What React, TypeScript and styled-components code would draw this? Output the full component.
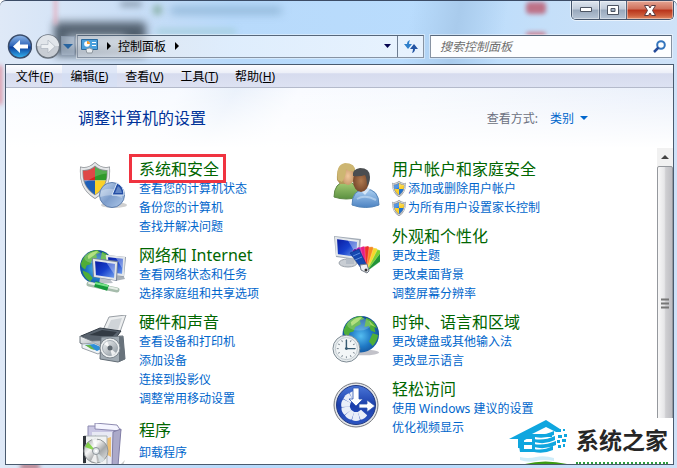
import React from "react";
import styled, { createGlobalStyle, css } from "styled-components";

const Global = createGlobalStyle`
  *, *::before, *::after { box-sizing: border-box; }
  body {
    margin: 0;
    font-family: "Noto Sans", "Noto Sans CJK SC", sans-serif;
    font-size: 12px;
    line-height: 19px;
    color: #000;
  }
  button, input, select { font: inherit; color: inherit; margin: 0; padding: 0; }
  svg { display: block; flex: none; }
`;

const Frame = styled.div`
  position: relative;
  display: flex;
  flex-direction: column;
  height: 100vh;
  padding: 0 3px 3px 5px;
  overflow: hidden;
  border-top: 1px solid #3c4c66;
  border-radius: 6px 6px 0 0;
  background:
    linear-gradient(100deg, transparent 60%, #a9cbec 67%, transparent 74%) 0 0 / 100% 64px no-repeat,
    linear-gradient(90deg, #dfe9f7 0, #c9def6 20%, #b8dafb 34%, #b9dcfd 66%, #c4dff9 80%, #cfe2f8 100%);
`;

const Smudge = styled.span<{ $x: number; $y: number; $w: number; $h: number; $c: string; $b?: number }>`
  position: absolute;
  left: ${(p) => p.$x}px;
  top: ${(p) => p.$y}px;
  width: ${(p) => p.$w}px;
  height: ${(p) => p.$h}px;
  background: ${(p) => p.$c};
  filter: blur(${(p) => p.$b ?? 4}px);
  border-radius: 4px;
`;

const TitleBar = styled.header`
  position: relative;
  display: flex;
  justify-content: flex-end;
  height: 33px;
`;

const Captions = styled.div`
  display: flex;
  height: 19px;
  border: 1px solid #46566c;
  border-top: 0;
  border-radius: 0 0 5px 5px;
  overflow: hidden;
  box-shadow: 0 0 0 1px #ffffff99;
`;

const Caption = styled.button<{ $close?: boolean }>`
  display: grid;
  place-items: center;
  width: ${(p) => (p.$close ? 47 : 27)}px;
  border: 0;
  border-left: 1px solid #55657c;
  background: ${(p) =>
    p.$close
      ? "linear-gradient(#e5a493, #cf6f5a 45%, #b8321a 50%, #cc5d3c 80%, #e08a64)"
      : "linear-gradient(#dfe6ef, #c0cbd9 45%, #98a8bc 50%, #b6c4d5)"};
  box-shadow: inset 0 0 0 1px #ffffff66;
  &:first-child { border-left: 0; }
`;

const NavRow = styled.nav`
  position: relative;
  display: flex;
  align-items: center;
  height: 24px;
  margin-bottom: 6px;
  padding-right: 2px;
`;

const Travel = styled.div`
  display: flex;
  align-items: center;
  width: 72px;
  gap: 1px;
  button { border: 0; background: none; }
`;

const HistoryButton = styled.button`
  display: grid;
  place-items: center;
  width: 14px;
  height: 20px;
  && { background: #b9c9dc88; box-shadow: inset 0 0 0 1px #7f8fa388; }
`;

const fieldEdge = css`
  height: 23px;
  border: 1px solid #8793a3;
  border-top-color: #56677b;
  box-shadow: 0 0 0 1px #ffffff66;
`;

const Address = styled.div`
  ${fieldEdge}
  display: flex;
  align-items: center;
  flex: 345 1 0;
  background: linear-gradient(90deg, #dfe4ea99, #e6ebf2bb 20%, #e8f2fdcc 45%, #eff6fedd);
`;

const Crumb = styled.button`
  border: 0;
  background: none;
  white-space: nowrap;
`;

const Glyph = styled.span<{ $narrow?: boolean }>`
  display: grid;
  place-items: center;
  width: ${(p) => (p.$narrow ? 18 : 22)}px;
`;

const AddressButton = styled.button<{ $divided?: boolean }>`
  display: grid;
  place-items: center;
  width: ${(p) => (p.$divided ? 26 : 20)}px;
  height: 21px;
  margin-left: ${(p) => (p.$divided ? 0 : "auto")};
  border: 0;
  border-left: ${(p) => (p.$divided ? "1px solid #6d7d92" : "0")};
  background: none;
`;

const Search = styled.label`
  ${fieldEdge}
  display: flex;
  align-items: center;
  flex: 226 1 0;
  margin-left: 6px;
  padding: 0 5px 0 9px;
  background: #fdfeff;
  input {
    flex: 1;
    min-width: 0;
    border: 0;
    outline: 0;
    background: none;
  }
  input::placeholder { color: #6e6e6e; opacity: 1; font-style: italic; }
`;

const Client = styled.div`
  position: relative;
  display: flex;
  flex-direction: column;
  flex: 1;
  min-height: 0;
  border: 1px solid #4a5a6e;
  background: #fff;
`;

const MenuBar = styled.div`
  display: flex;
  flex: none;
  height: 23px;
  padding-left: 1px;
  border-bottom: 1px solid #b4bacb;
  background: linear-gradient(#fdfdff, #eceff8 35%, #d6dbee 40%, #dde2f2);
`;

const MenuItem = styled.button<{ $hot?: boolean }>`
  min-width: 55px;
  padding: 0 8px;
  border: 0;
  background: ${(p) => (p.$hot ? "#d3e0f599" : "none")};
  white-space: nowrap;
`;

const Banner = styled.div`
  display: flex;
  align-items: center;
  justify-content: space-between;
  flex: none;
  height: 60px;
  padding: 0 85px 0 72px;
  background:
    linear-gradient(#ffffff00, #fff),
    linear-gradient(120deg, #fafcff 0, #f7faff 25%, #eaf1fb 33%, #f9fbff 42%, #f6f9fe 60%, #e9effa 100%);
`;

const Title = styled.h1`
  margin: 0;
  font-size: 16px;
  font-weight: 400;
  color: #003399;
`;

const ViewBy = styled.label`
  display: flex;
  align-items: center;
  color: #6b7080;
  select {
    width: 26px;
    margin: 0 4px 0 12px;
    border: 0;
    appearance: none;
    background: none;
    color: #0066cc;
    outline: 0;
  }
`;

const Pane = styled.main`
  display: flex;
  flex: 1;
  min-height: 0;
  overflow: hidden;
`;

const Columns = styled.div`
  display: grid;
  grid-template-columns: 253px 1fr;
  flex: 1;
  padding: 12px 0 0 73px;
`;

const Column = styled.div`
  display: flex;
  flex-direction: column;
  gap: 10px;
`;

const Category = styled.section<{ $loose?: boolean }>`
  display: flex;
  gap: 12px;
  margin-top: ${(p) => (p.$loose ? 3 : 0)}px;
  > svg { margin-top: 2px; }
`;

const Heading = styled.h2<{ $marked?: boolean; $loose?: boolean }>`
  position: relative;
  width: max-content;
  margin: 0 0 ${(p) => (p.$loose ? 3 : 0)}px;
  font-size: 16px;
  font-weight: 400;
  line-height: 19px;
  a { color: #006600; text-decoration: none; }
  ${(p) =>
    p.$marked &&
    css`
      &::after {
        content: "";
        position: absolute;
        inset: -6px -7px -4px -10px;
        border: 3px solid #f03340;
        pointer-events: none;
      }
    `}
`;

const Tasks = styled.ul`
  margin: 0;
  padding: 0;
  list-style: none;
`;

const Task = styled.li`
  display: flex;
  align-items: center;
  gap: 2px;
  height: 19px;
  white-space: nowrap;
  a { color: #0066cc; text-decoration: none; }
`;

const Scroll = styled.div`
  display: flex;
  flex-direction: column;
  flex: none;
  width: 16px;
  background: #f0f0f0;
`;

const ScrollButton = styled.button`
  display: grid;
  place-items: center;
  height: 18px;
  border: 0;
  background: #f1f1f1;
`;

const Thumb = styled.div`
  display: grid;
  place-items: center;
  flex: 1;
  border: 1px solid #95989d;
  border-radius: 2px;
  background: linear-gradient(90deg, #f8f8f8, #e6e6e8 45%, #cfcfd2 55%, #bdbdc2);
  padding-bottom: 24px;
`;

const Watermark = styled.div`
  position: absolute;
  right: 0;
  bottom: 0;
  display: flex;
  align-items: center;
  height: 46px;
  padding-right: 5px;
  background: #fff;
`;

const Brand = styled.strong`
  margin-left: 6px;
  border-bottom: 2px dotted #2f9c3c;
  font-size: 23px;
  line-height: 44px;
  color: #262626;
`;

const Arrow = ({ d, w, h, c }: { d: string; w: number; h: number; c: string }) => (
  <svg width={w} height={h} aria-hidden="true"><path d={d} fill={c} /></svg>
);

const shieldPath = "M24 2C18 7 10 9 3 8c-1 16 3 28 21 38C42 36 46 24 45 8 38 9 30 7 24 2z";

const Quarters = ({ id, uac }: { id: string; uac?: boolean }) => (
  <>
    <clipPath id={id}><path d={shieldPath} /></clipPath>
    <g clipPath={`url(#${id})`}>
      <path d="M0 0h24v24H0z" fill={uac ? "#2f7fdc" : "#d8201f"} />
      <path d="M24 0h24v24H24z" fill={uac ? "#fbd02c" : "#2f9a2a"} />
      <path d="M0 24h24v24H0z" fill={uac ? "#fbd02c" : "#1d5fb8"} />
      <path d="M24 24h24v24H24z" fill={uac ? "#2272cf" : "#fbd12a"} />
      <path d="M0 0h48v14C30 14 15 22 3 30z" fill="#fff" opacity=".18" />
    </g>
    <path d={shieldPath} fill="none" stroke="#8b8f94" strokeWidth={uac ? 6 : 5} />
    <path d={shieldPath} fill="none" stroke="#e5e7e9" strokeWidth={3} />
  </>
);

const UacShield = () => (
  <svg width="14" height="16" viewBox="-1 -1 50 50" preserveAspectRatio="none" aria-hidden="true">
    <Quarters id="uac" uac />
  </svg>
);

const SecurityIcon = () => (
  <svg width="48" height="48" aria-hidden="true">
    <defs>
      <linearGradient id="disc" x1="0" y1="0" x2="1" y2="1">
        <stop offset="0" stopColor="#c6d9f0" /><stop offset=".5" stopColor="#7d9dcb" /><stop offset="1" stopColor="#afc9ea" />
      </linearGradient>
    </defs>
    <ellipse cx="35" cy="43" rx="13" ry="3" fill="#777" opacity=".35" />
    <svg width="32" height="37" viewBox="-1 -1 50 50" preserveAspectRatio="none"><Quarters id="sec" /></svg>
    <circle cx="33" cy="33" r="12.500" fill="url(#disc)" stroke="#5f7fae" />
    <path d="M22 29q9-5 21 1v6q-10-5-22-1z" fill="#fff" opacity=".3" />
    <path d="M33 33l5-12q7 3 7 12z" fill="#244ea5" stroke="#dce9f8" />
    <path d="M36 31l3-7q3 2 4 7z" fill="#6286c6" />
  </svg>
);

const Globe = ({ id, cx, cy, r }: { id: string; cx: number; cy: number; r: number }) => (
  <g transform={`translate(${cx - r} ${cy - r}) scale(${r / 20})`}>
    <radialGradient id={id} cx=".5" cy=".55" r=".6">
      <stop offset="0" stopColor="#55bdf0" /><stop offset=".5" stopColor="#1f78c4" /><stop offset="1" stopColor="#0e4288" />
    </radialGradient>
    <circle cx="20" cy="20" r="20" fill={`url(#${id})`} />
    <path d="M4 9Q10 1 20 0l4 3-5 2 1 4-6 3-2 5-4 1-2 5-4-3-1-4zM26 2q9 3 12 12l-3-2 1 6-5-2-2-5-5 1 1-5zM33 19l6 2q-1 7-6 12l-4-5zM3 24l7 3 5 6-3 4Q4 32 3 24z" fill="#4fae38" />
    <path d="M9 7q6-6 13-6l-5 5-7 5zM29 5l7 7-5-2z" fill="#b7e36d" opacity=".8" />
    <ellipse cx="18" cy="9" rx="13" ry="7" fill="#fff" opacity=".2" />
  </g>
);

const Screen = ({ d, shine }: { d: string; shine: string }) => (
  <>
    <path d={d} fill="url(#screen)" stroke="#e2e6ea" strokeWidth="2" />
    <path d={shine} fill="#fff" opacity=".35" />
  </>
);

const ScreenGradient = () => (
  <linearGradient id="screen" x1="0" y1="0" x2="1" y2="1">
    <stop offset="0" stopColor="#08189a" /><stop offset=".5" stopColor="#1740cc" /><stop offset="1" stopColor="#7faef2" />
  </linearGradient>
);

const NetworkIcon = () => (
  <svg width="48" height="48" aria-hidden="true">
    <defs><ScreenGradient /></defs>
    <Globe id="net" cx={18} cy={19} r={17} />
    <path d="M37 28l7-1 2 4-10 2z" fill="#a8b0b8" />
    <path d="M28 7l19 2-2 20-16-3z" fill="#8e98a6" />
    <Screen d="M28 8l17 2-1 17-15-2z" shine="M37 10l7 1-1 9z" />
    <path d="M21 30h9l4 5-14 1z" fill="#bbc1c8" />
    <path d="M13 10l26 3-1 20-24-4z" fill="#7b8698" />
    <Screen d="M15 12l22 3-1 16-20-3z" shine="M27 14l9 1-1 11z" />
    <path d="M10 36l28 6" stroke="#a6bcac" strokeWidth="5" strokeLinecap="round" />
    <path d="M10 35l28 6" stroke="#e5eee6" strokeWidth="2" strokeLinecap="round" />
    <path d="M16 36l13 4" stroke="#149a3a" strokeWidth="6" />
    <path d="M16 35l13 3" stroke="#7be28c" strokeWidth="2" />
  </svg>
);

const HardwareIcon = () => (
  <svg width="48" height="48" aria-hidden="true">
    <defs>
      <linearGradient id="metal" x1="0" y1="0" x2="1" y2="1">
        <stop offset="0" stopColor="#f2f4f5" /><stop offset="1" stopColor="#8b959d" />
      </linearGradient>
    </defs>
    <path d="M30 2l17-2-6 17-17-2z" fill="#eceeef" stroke="#9a9fa5" />
    <path d="M32 5l11-2-4 12-11-1z" fill="#cfd4d8" />
    <path d="M2 21l19-8 21 3-9 12-19-1z" fill="#59636e" stroke="#333c46" />
    <path d="M10 20l13-5 15 2-5 5z" fill="#333b44" />
    <path d="M1 21l12 5 19-1-2 10-18-2-11-5z" fill="url(#metal)" stroke="#6d767f" />
    <path d="M3 29l12-1 13 6-9 5-16-6z" fill="#eef3f6" stroke="#9aa1a8" />
    <path d="M6 30l9-1 9 4-6 3z" fill="#2d8ed8" /><path d="M6 30l5 0 5 5-4-1z" fill="#65b54b" />
    <path d="M22 22l22-1 2 23-7 3-18-3z" fill="#a1abb3" stroke="#626c75" />
    <path d="M40 21l4 1 2 22-6 3z" fill="#68727b" />
    <circle cx="31" cy="33" r="10" fill="#eceff0" stroke="#7e878f" />
    <circle cx="31" cy="33" r="7.500" fill="url(#metal)" stroke="#a3abb2" />
    <path d="M31 33l-6-4 3-3zM31 33l6 5-4 3z" fill="#fff" opacity=".8" />
    <circle cx="31" cy="33" r="2.500" fill="#5f6870" />
  </svg>
);

const ProgramsIcon = () => (
  <svg width="48" height="48" aria-hidden="true">
    <defs>
      <linearGradient id="cd" x1="0" y1="0" x2="1" y2="1">
        <stop offset="0" stopColor="#8c9192" /><stop offset=".35" stopColor="#f7f7f7" /><stop offset=".6" stopColor="#a6a9aa" /><stop offset="1" stopColor="#eee" />
      </linearGradient>
    </defs>
    <g transform="translate(4 0)">
      <path d="M36 43l6-6-3 8z" fill="#777" opacity=".4" />
      <path d="M5 3h6l25 3-3 38H5z" fill="#c9c6e3" stroke="#8e8bb1" />
      <path d="M12 0l22 2 4 6-26-2z" fill="#f5f5ff" stroke="#8e8bb1" />
      <path d="M9 9h21v35H9z" fill="#e8e9f4" />
      <path d="M30 9l8-3-3 37-6 2z" fill="#aba9c9" stroke="#807da5" />
      <path d="M15 14l7 2 6-2v20l-12-7z" fill="#edc074" /><path d="M12 12l7 9-8 2z" fill="#8fc2a0" />
      <path d="M1 13h23v31H1z" fill="#f0f2f2" stroke="#aab1b5" /><path d="M0 13h3v27H0z" fill="#30343a" />
      <circle cx="13" cy="28" r="12" fill="url(#cd)" stroke="#929799" />
      <path d="M13 28L2 24l3-5z" fill="#72d028" opacity=".8" /><path d="M13 28l9 9-5 3z" fill="#d5dde0" />
      <path d="M13 28L9 16l5-1zM13 28l1 12-6-2z" fill="#fff" opacity=".8" />
      <circle cx="13" cy="28" r="3.500" fill="#e4e9eb" stroke="#899197" /><circle cx="13" cy="28" r="1.300" fill="#fff" />
    </g>
  </svg>
);

const UsersIcon = () => (
  <svg width="48" height="48" aria-hidden="true">
    <defs>
      <linearGradient id="green" x2="0" y2="1"><stop offset="0" stopColor="#abd078" /><stop offset="1" stopColor="#5b9140" /></linearGradient>
      <linearGradient id="blue" x2="0" y2="1"><stop offset="0" stopColor="#acd0f2" /><stop offset="1" stopColor="#4d83c2" /></linearGradient>
      <radialGradient id="tan"><stop offset="0" stopColor="#f0c79d" /><stop offset="1" stopColor="#c99a6c" /></radialGradient>
      <radialGradient id="brown"><stop offset="0" stopColor="#b07a50" /><stop offset="1" stopColor="#78482c" /></radialGradient>
    </defs>
    <path d="M2 35q0-14 12-16 12 1 13 16-13 4-25 0z" fill="url(#green)" stroke="#5e8746" />
    <path d="M5 18Q4 4 13 2q9-1 10 6l-1 11-5 3H8z" fill="#b39a5a" />
    <ellipse cx="16" cy="14" rx="6" ry="9" fill="url(#tan)" />
    <path d="M6 18Q3 3 13 1q10 0 10 8-6 1-9-2 0 8-4 13z" fill="#cdb672" />
    <path d="M20 43q0-15 13-16 14 0 14 16-13 5-27 0z" fill="url(#blue)" stroke="#5484b7" />
    <path d="M27 27l6 6 5-6-5-3z" fill="#d5e6f7" />
    <ellipse cx="29" cy="19" rx="8" ry="11" fill="url(#brown)" />
    <path d="M21 14q-1-7 7-8 10 0 10 9 0 6-3 9 0-8-2-11-5 2-12 1z" fill="#4a4d50" />
    <path d="M25 37q8-5 19 1" stroke="#d8eafa" strokeWidth="2" fill="none" opacity=".5" />
  </svg>
);

const fan = ["#6a1fae", "#b51fb4", "#e81f83", "#f03028", "#f58a22", "#f4d82a", "#7fd02e", "#219436"];

const AppearanceIcon = () => (
  <svg width="48" height="48" aria-hidden="true">
    <defs><ScreenGradient /></defs>
    <ellipse cx="16" cy="34" rx="9" ry="4" fill="#c9ced4" stroke="#9ba2aa" />
    <path d="M14 27h8v8h-8z" fill="#b5bdc7" />
    <path d="M2 7l27 3-2 21-23-3z" fill="#a3acb7" />
    <Screen d="M4 9l22 3-1 17-20-3z" shine="M15 10l10 2-1 13z" />
    {fan.map((c, i) => (
      <path key={c} d="M34 43L31 18l3-1 4 2z" fill={c} stroke="#ffffff88" strokeWidth=".4" transform={`rotate(${-26 + i * 10} 34 43)`} />
    ))}
    <path d="M18 24l9-4 8 17-6 2z" fill="#1549b0" stroke="#0b2f80" strokeWidth=".6" />
    <path d="M21 27l7-3M23 31l7-3" stroke="#5b8de0" />
    <path d="M28 36l7-1 2 7-2 2-6-3z" fill="#eef0f3" stroke="#747b86" />
    <circle cx="34" cy="41" r="1.500" fill="#333" />
  </svg>
);

const ClockIcon = () => (
  <svg width="48" height="48" viewBox="0 0 50 50" aria-hidden="true">
    <ellipse cx="33" cy="39" rx="16" ry="3" fill="#667" opacity=".4" />
    <Globe id="clk" cx={30} cy={20} r={19} />
    <circle cx="15" cy="35" r="14" fill="#e6ebed" stroke="#7a8790" />
    <circle cx="15" cy="35" r="11.500" fill="#f3f6f7" stroke="#c0c9ce" />
    {Array.from({ length: 12 }, (_, i) => (
      <path key={i} d="M15 25v2" stroke="#7e8b94" transform={`rotate(${i * 30} 15 35)`} />
    ))}
    <path d="M15 26v9h9" fill="none" stroke="#385c73" strokeWidth="1.500" />
    <circle cx="15" cy="35" r="1.500" fill="#385c73" />
  </svg>
);

const wedges = [0, 1, 2, 3, 4, 5, 6];

const AccessIcon = () => (
  <svg width="48" height="48" aria-hidden="true">
    <defs>
      <linearGradient id="access" x2="0" y2="1"><stop offset="0" stopColor="#4a76d8" /><stop offset=".5" stopColor="#1c3fab" /><stop offset="1" stopColor="#2c55c2" /></linearGradient>
    </defs>
    <circle cx="24" cy="23" r="22" fill="#e2e4e8" stroke="#76797f" />
    <circle cx="24" cy="23" r="19.500" fill="url(#access)" stroke="#203984" />
    {wedges.map((i) => (
      <path key={i} d="M20 38l2-8h4l2 8q-4 2-8 0z" fill="#e9eef8" transform={`rotate(${-34 + i * 34} 24 24)`} />
    ))}
    <path d="M21 6h6v11h4l-7 7-7-7h4z" fill="#fff" stroke="#2f55b0" strokeWidth=".8" />
    <path d="M27 22h8v-4l8 6-8 6v-4h-8z" fill="#fff" stroke="#2f55b0" strokeWidth=".8" />
  </svg>
);

type CategoryData = {
  title: string;
  icon: React.ReactNode;
  tasks: string[];
  shield?: boolean;
  marked?: boolean;
  loose?: boolean;
};

const columns: CategoryData[][] = [
  [
    { title: "系统和安全", icon: <SecurityIcon />, tasks: ["查看您的计算机状态", "备份您的计算机", "查找并解决问题"], marked: true },
    { title: "网络和 Internet", icon: <NetworkIcon />, tasks: ["查看网络状态和任务", "选择家庭组和共享选项"] },
    { title: "硬件和声音", icon: <HardwareIcon />, tasks: ["查看设备和打印机", "添加设备", "连接到投影仪", "调整常用移动设置"] },
    { title: "程序", icon: <ProgramsIcon />, tasks: ["卸载程序"], loose: true },
  ],
  [
    { title: "用户帐户和家庭安全", icon: <UsersIcon />, tasks: ["添加或删除用户帐户", "为所有用户设置家长控制"], shield: true },
    { title: "外观和个性化", icon: <AppearanceIcon />, tasks: ["更改主题", "更改桌面背景", "调整屏幕分辨率"] },
    { title: "时钟、语言和区域", icon: <ClockIcon />, tasks: ["更改键盘或其他输入法", "更改显示语言"] },
    { title: "轻松访问", icon: <AccessIcon />, tasks: ["使用 Windows 建议的设置", "优化视频显示"] },
  ],
];

const menus = [["文件", "F"], ["编辑", "E"], ["查看", "V"], ["工具", "T"], ["帮助", "H"]];

const BackIcon = () => (
  <svg width="27" height="27" aria-hidden="true">
    <defs>
      <linearGradient id="back" x2="0" y2="1"><stop offset="0" stopColor="#8fb7e8" /><stop offset=".48" stopColor="#2c63b8" /><stop offset=".52" stopColor="#0b3c9a" /><stop offset="1" stopColor="#36b7f2" /></linearGradient>
    </defs>
    <circle cx="15" cy="13.500" r="11.500" fill="url(#back)" stroke="#3b4d6b" strokeWidth="1.500" />
    <path d="M8 13.500l7-6.500v4.500h8v4h-8V20z" fill="#fff" />
  </svg>
);

const ForwardIcon = () => (
  <svg width="27" height="27" aria-hidden="true">
    <circle cx="15" cy="13.500" r="11.500" fill="#c8cdd4" stroke="#68717c" strokeWidth="1.500" />
    <path d="M4 13a11 11 0 0 1 22 0z" fill="#e1e5ea" />
    <path d="M22 13.500L15 7v4.500H8v4h7V20z" fill="#edf0f3" stroke="#aeb5be" strokeWidth=".7" />
  </svg>
);

const PanelIcon = () => (
  <svg width="17" height="16" aria-hidden="true">
    <path d="M.5 1.500h16v10H.5z" fill="#4ba0dc" stroke="#2a6a9f" />
    <circle cx="6" cy="6" r="2.800" fill="#fff" /><path d="M6 6V3a3 3 0 0 1 3 3z" fill="#f5a034" />
    <path d="M11 4.500h4M11 7.500h4" stroke="#fff" />
    <path d="M5 12q3-4 7 0l-1 3H6z" fill="#e9edf0" stroke="#8d969e" />
  </svg>
);

const HouseLogo = () => (
  <svg width="62" height="46" aria-hidden="true">
    <path d="M1 21L38 2l14 9v3h-4l-10-5-14 7h20v3H22l-7 4v7h-5v-9z" fill="#0fa6df" />
    <path d="M12 18h15v16H12zM16 21v3h8v-3zM16 27v4h8v-4z" fill="#0fa6df" fillRule="evenodd" />
    <path d="M10 22h4v12h-2z" fill="#0fa6df" />
    <path d="M27 16q8 2 19-3v4q-10 4-19 2zM26 21q10 2 21-3v4q-10 5-21 2zM26 26q10 2 22-3v4q-11 5-22 2zM26 31q9 2 19-3v4q-9 4-19 2z" fill="#0fa6df" />
    <path d="M50 11h3v3h-3zM55 11h2v2h-2zM50 17h4v3h-4zM56 16h3v3h-3zM49 22h3v3h-3zM54 21h4v3h-4zM50 27h3v3h-3zM55 26h2v3h-2z" fill="#0fa6df" />
    <path d="M12 39q8 2 16 0t18 1v3q-10-2-18 0t-16-1z" fill="#0fa6df" opacity=".2" />
    <path d="M17 46q20-5 42 0z" fill="#3c9a12" />
  </svg>
);

export default function App() {
  return (
    <Frame>
      <Global />
      <Smudge $x={54} $y={21} $w={92} $h={34} $c="#52606f" />
      <Smudge $x={66} $y={34} $w={60} $h={14} $c="#a6b3c2" />
      <Smudge $x={120} $y={0} $w={22} $h={6} $c="#8fa2b6" $b={3} />
      <Smudge $x={153} $y={4} $w={9} $h={10} $c="#8fb4ae" $b={3} />
      <Smudge $x={170} $y={6} $w={112} $h={7} $c="#8fb5d6" $b={4} />
      <Smudge $x={156} $y={28} $w={80} $h={5} $c="#a4cdda" $b={3} />
      <Smudge $x={54} $y={-6} $w={3} $h={30} $c="#e5adbd" $b={2} />
      <Smudge $x={526} $y={1} $w={20} $h={12} $c="#bd7288" $b={2} />
      <Smudge $x={526} $y={31} $w={20} $h={5} $c="#c87f92" $b={2} />
      <Smudge $x={-2} $y={64} $w={4} $h={40} $c="#dd8b9c" $b={2} />
      <Smudge $x={20} $y={463} $w={20} $h={5} $c="#b4737e" $b={2} />
      <TitleBar>
        <Captions>
          <Caption aria-label="最小化">
            <svg width="12" height="6"><path d="M.5.5h11v4H.5z" fill="#fff" stroke="#4d5563" /></svg>
          </Caption>
          <Caption aria-label="最大化">
            <svg width="12" height="10"><path d="M.5.5h11v9H.5zM4 3.500v3h4v-3z" fill="#fff" fillRule="evenodd" stroke="#4d5563" /></svg>
          </Caption>
          <Caption $close aria-label="关闭">
            <svg width="12" height="11"><path d="M.5.5h4L6 3l1.500-2.500h4l-3 5 3 5h-4L6 8l-1.500 2.500h-4l3-5z" fill="#fff" stroke="#5b3b40" /></svg>
          </Caption>
        </Captions>
      </TitleBar>
      <NavRow>
        <Travel>
          <button aria-label="后退"><BackIcon /></button>
          <button aria-label="前进"><ForwardIcon /></button>
          <HistoryButton aria-label="历史记录"><Arrow d="M0 1h10L5 6z" w={10} h={7} c="#28649f" /></HistoryButton>
        </Travel>
        <Address>
          <Glyph><PanelIcon /></Glyph>
          <Glyph $narrow><Arrow d="M0 0l4 4-4 4z" w={4} h={8} c="#000" /></Glyph>
          <Crumb>控制面板</Crumb>
          <Glyph><Arrow d="M0 0l4 4-4 4z" w={4} h={8} c="#000" /></Glyph>
          <AddressButton aria-label="以前的位置"><Arrow d="M0 0h7L3.500 4z" w={7} h={4} c="#04044f" /></AddressButton>
          <AddressButton $divided aria-label="刷新">
            <svg width="14" height="13"><path d="M6 0Q3 1 3 4H0l4 5 4-5H5q0-2 1-4z" fill="#2f80cb" /><path d="M8 13q3-1 3-4h3l-4-5-4 5h3q0 2-1 4z" fill="#2455a4" /></svg>
          </AddressButton>
        </Address>
        <Search>
          <input type="text" aria-label="搜索控制面板" placeholder="搜索控制面板" />
          <svg width="13" height="13"><circle cx="8" cy="5" r="3.800" fill="none" stroke="#3375bd" strokeWidth="2" /><path d="M5.500 7.500L1 12" stroke="#264b99" strokeWidth="2.500" /></svg>
        </Search>
      </NavRow>
      <Client>
        <MenuBar>
          {menus.map(([name, key]) => (
            <MenuItem key={key} $hot={key === "E"}>{name}(<u>{key}</u>)</MenuItem>
          ))}
        </MenuBar>
        <Banner>
          <Title>调整计算机的设置</Title>
          <ViewBy>
            查看方式:
            <select defaultValue="类别"><option>类别</option></select>
            <Arrow d="M0 0h8L4 4z" w={8} h={4} c="#0066cc" />
          </ViewBy>
        </Banner>
        <Pane>
          <Columns>
            {columns.map((list, i) => (
              <Column key={i}>
                {list.map((c) => (
                  <Category key={c.title} $loose={c.loose}>
                    {c.icon}
                    <div>
                      <Heading $marked={c.marked} $loose={c.loose}><a href="#">{c.title}</a></Heading>
                      <Tasks>
                        {c.tasks.map((t) => (
                          <Task key={t}>{c.shield && <UacShield />}<a href="#">{t}</a></Task>
                        ))}
                      </Tasks>
                    </div>
                  </Category>
                ))}
              </Column>
            ))}
          </Columns>
          <Scroll>
            <ScrollButton aria-label="向上滚动"><Arrow d="M0 4l4-4 4 4z" w={8} h={4} c="#444" /></ScrollButton>
            <Thumb><svg width="8" height="11"><path d="M0 1.500h8M0 5.500h8M0 9.500h8" stroke="#777" strokeWidth="2" /></svg></Thumb>
          </Scroll>
        </Pane>
        <Watermark><HouseLogo /><Brand>系统之家</Brand></Watermark>
      </Client>
    </Frame>
  );
}
